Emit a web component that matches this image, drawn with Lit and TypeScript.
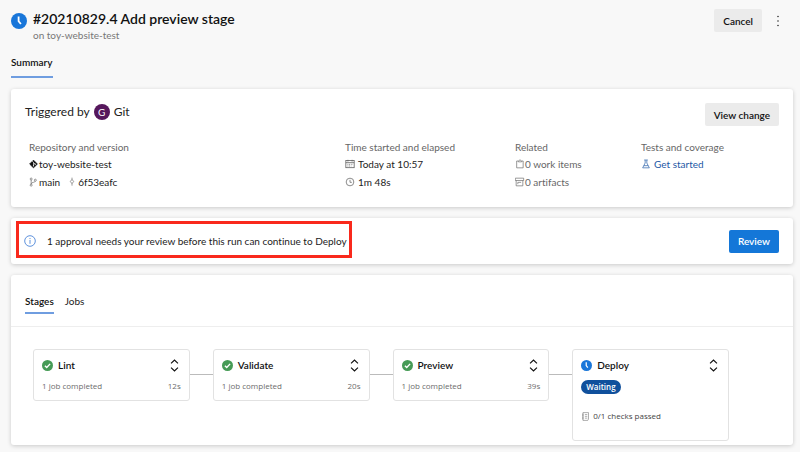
import { LitElement, html, css, svg, nothing } from "lit";
import { customElement, property } from "lit/decorators.js";

const clock = html`<svg class="clock" viewBox="0 0 16 16" aria-hidden="true">
  <circle cx="8" cy="8" r="8" fill="#1976d9" />
  <path d="M7.6 3.4V8.2L9.9 11" fill="none" stroke="#fff" stroke-width="1.8" />
</svg>`;

const check = html`<svg class="check" viewBox="0 0 16 16" aria-hidden="true">
  <circle cx="8" cy="8" r="8" fill="#469b56" />
  <path d="M4.2 8.4L6.9 11L11.8 5.6" fill="none" stroke="#fff" stroke-width="2" />
</svg>`;

const line = (body: unknown) => html`<svg
  class="line"
  viewBox="0 0 12 12"
  fill="none"
  stroke="currentColor"
  stroke-width="1"
  aria-hidden="true"
>${body}</svg>`;

const icons = {
  repo: line(svg`<path d="M5.4 1.4L10 6L5.4 10.6L.8 6Z" fill="#111" stroke="#111" stroke-linejoin="round" />
    <path d="M4 2.6L5.4 4.2V8.4M5.4 4.4L7.4 6.2" stroke="#fff" stroke-width=".8" />
    <circle cx="5.4" cy="8.2" r=".8" fill="#fff" stroke="none" /><circle cx="7.4" cy="6.2" r=".8" fill="#fff" stroke="none" />`),
  branch: line(svg`<g stroke-width=".8"><circle cx="2.6" cy="2.4" r="1.2" /><circle cx="2.6" cy="9.8" r="1.2" />
    <circle cx="7.6" cy="3.8" r="1.2" /><path d="M2.6 3.6V8.6M7.6 5C7.6 6.8 2.8 6 2.6 8.2" /></g>`),
  commit: line(svg`<g stroke-width=".8"><path d="M6 2.8L8 5.4L6 8L4 5.4ZM6 .8V2.8M6 8V10.4" /></g>`),
  calendar: line(svg`<rect x="1" y="1.8" width="10" height="8.6" /><path d="M1 4.4H11M3.5 1V3M8.5 1V3" />
    <path d="M3 6.4H9.4M3 8.4H7.6" stroke-dasharray="1 1" />`),
  time: line(svg`<circle cx="6" cy="6" r="4.6" stroke-width=".9" /><path d="M6 3.4V6.4H8.2" stroke-width=".9" />`),
  work: line(svg`<path d="M4 2.4H2V10.6H9.8V2.4H8M4 3.4C4 .6 8 .6 8 3.4Z" stroke-width=".8" />`),
  artifact: line(svg`<path d="M.4 1.4H10.4V4.2H.4ZM1.4 4.2V10.6H9.4V4.2M3.4 8.6V6.4H7.4" stroke-width=".8" />`),
  flask: line(svg`<path d="M3.8 1.2H8.2M5 1.4V4.8L2 10.6H10L7 4.8V1.4M3.4 8H8.6" stroke-width=".8" />`),
  info: line(svg`<circle cx="6" cy="6" r="5.3" stroke-width=".9" /><path d="M6 5V8.8M6 3V4.1" stroke-width=".9" />`),
  checks: line(svg`<path d="M2.6 .8H10V9.4L9 11.2H2.6ZM1.4 3H3.6M1.4 5H3.6M1.4 7H3.6M1.4 9H3.6M5.2 3.4H8.4M5.2 5.8H8.4M5.2 8.2H8.4" stroke-width=".8" />`),
  expand: line(svg`<path d="M2.8 4L6 .9L9.2 4M2.8 8L6 11.1L9.2 8" stroke="#111" stroke-width="1.1" />`),
};

interface Stage {
  name: string;
  duration?: string;
  checks?: string;
}

const stages: Stage[] = [
  { name: "Lint", duration: "12s" },
  { name: "Validate", duration: "20s" },
  { name: "Preview", duration: "39s" },
  { name: "Deploy", checks: "0/1 checks passed" },
];

@customElement("stage-card")
class StageCard extends LitElement {
  @property({ attribute: false }) stage!: Stage;

  static styles = css`
    :host {
      display: block;
      box-sizing: border-box;
      border: 1px solid #e2e2e2;
      border-radius: 3px;
      background: #fff;
      padding: 8px;
    }
    .head {
      display: flex;
      align-items: center;
      gap: 5px;
      height: 14px;
    }
    .name {
      margin: 0;
      flex: 1;
      font-size: 10px;
      line-height: 14px;
      font-weight: 600;
      color: #111;
    }
    svg {
      display: block;
      flex: none;
      width: 11px;
      height: 11px;
    }
    .toggle {
      border: 0;
      padding: 0;
      background: none;
    }
    .toggle svg {
      width: 13px;
      height: 13px;
    }
    .foot,
    .waiting,
    .checks {
      font-family: "Open Sans", "Noto Sans", sans-serif;
      font-size: 8px;
    }
    .foot {
      display: flex;
      justify-content: space-between;
      margin-top: 8px;
      line-height: 12px;
      color: #6c6c6c;
    }
    .waiting {
      display: block;
      width: fit-content;
      margin-top: 8px;
      padding: 0 5px;
      border-radius: 7px;
      background: #10509c;
      color: #fff;
      font-weight: 600;
      line-height: 14px;
    }
    .checks {
      display: flex;
      align-items: center;
      gap: 3px;
      margin: 16px 0 10px;
      line-height: 12px;
      color: #444;
    }
    .checks svg {
      width: 9px;
      height: 9px;
      color: #777;
    }
  `;

  render() {
    const { name, duration, checks } = this.stage;
    return html`
      <div class="head">
        ${checks ? clock : check}
        <h3 class="name">${name}</h3>
        <button class="toggle" aria-label="Expand ${name}">${icons.expand}</button>
      </div>
      ${checks
        ? html`<span class="waiting">Waiting</span>
            <div class="checks">${icons.checks}<span>${checks}</span></div>`
        : html`<div class="foot"><span>1 job completed</span><span>${duration}</span></div>`}
    `;
  }
}

@customElement("app-root")
class AppRoot extends LitElement {
  static styles = css`
    :host {
      display: block;
      box-sizing: border-box;
      min-height: 100vh;
      padding: 9px 7px 7px 11px;
      background: #f8f8f8;
      font-family: Lato, "Open Sans", sans-serif;
      font-variant-ligatures: none;
      font-size: 10px;
      line-height: 14px;
      color: #222;
    }
    h1, h2, p, dl, dd, dt {
      margin: 0;
      font-weight: 400;
    }
    svg {
      display: block;
      flex: none;
    }
    button {
      font: inherit;
      border: 0;
      font-weight: 600;
      border-radius: 2px;
      height: 23px;
      padding: 0 9px;
      color: #111;
      background: #ebebeb;
    }
    a {
      color: inherit;
      text-decoration: none;
    }
    header {
      display: flex;
      align-items: flex-start;
      gap: 6px;
    }
    header .clock {
      width: 16px;
      height: 16px;
      margin-top: 4px;
    }
    .titles {
      flex: 1;
    }
    h1 {
      font-size: 14px;
      line-height: 20px;
      font-weight: 600;
      color: #111;
    }
    .sub {
      line-height: 12px;
      color: #777;
    }
    header .more {
      background: none;
      padding: 0 8px;
      margin-right: 5px;
    }
    .more svg {
      width: 4px;
      height: 12px;
    }
    .tabs {
      display: flex;
      gap: 11px;
    }
    .tab {
      border-bottom: 2px solid transparent;
    }
    .tab.on {
      font-weight: 600;
      color: #111;
      border-color: #6f9de0;
    }
    .top .tab {
      padding-bottom: 7px;
    }
    .top {
      margin: 14px 0 11px;
    }
    .card {
      background: #fff;
      border-radius: 3px;
      box-shadow: 0 1px 4px #00000030;
      margin-bottom: 11px;
    }
    .run {
      padding: 14px 14px 14px;
    }
    .trigger {
      display: flex;
      align-items: flex-start;
      justify-content: space-between;
    }
    h2 {
      display: flex;
      align-items: center;
      gap: 4px;
      font-size: 12px;
      line-height: 18px;
    }
    .avatar {
      width: 16px;
      border-radius: 50%;
      background: #56175c;
      color: #fff;
      text-align: center;
      font-size: 10px;
      line-height: 16px;
    }
    .facts {
      display: grid;
      grid-template-columns: 316fr 170fr 126fr 138fr;
      padding: 14px 0 0 4px;
    }
    dt {
      color: #666;
      margin-bottom: 3px;
    }
    dt, dd {
      height: 14px;
    }
    dd {
      display: flex;
      align-items: center;
      gap: 3px;
      margin-bottom: 4px;
    }
    .line {
      width: 10px;
      height: 10px;
      color: #666;
    }
    .tight {
      gap: 0;
    }
    .muted {
      color: #666;
    }
    .hash {
      display: flex;
      align-items: center;
      margin-left: 7px;
      gap: 1px;
    }
    .link, .link .line {
      color: #1c57a5;
    }
    .banner {
      display: flex;
      align-items: center;
      justify-content: space-between;
      min-height: 46px;
      padding-right: 14px;
    }
    .message {
      display: flex;
      align-items: center;
      align-self: flex-start;
      gap: 11px;
      margin: 3px 5px 6px;
      padding: 10px 2px 7px 5px;
      border: 3px solid #f9291c;
    }
    .message .line {
      width: 12px;
      height: 12px;
      color: #4d86d8;
    }
    .review {
      background: #1477d8;
      color: #fff;
    }
    .stages {
      margin-bottom: 0;
    }
    .stages .tabs {
      padding: 19px 14px 12px;
      border-bottom: 1px solid #eee;
    }
    .stages .tab {
      padding-bottom: 4px;
    }
    .flow {
      display: flex;
      align-items: flex-start;
      padding: 22px 64px 4px 22px;
    }
    stage-card {
      flex: 1 1 0;
      min-width: 0;
    }
    .link-line {
      width: 23px;
      height: 1px;
      margin-top: 25px;
      background: #bbb;
    }
  `;

  render() {
    return html`
      <header>
        ${clock}
        <div class="titles">
          <h1>#20210829.4 Add preview stage</h1>
          <p class="sub">on toy-website-test</p>
        </div>
        <button>Cancel</button>
        <button class="more" aria-label="More actions">
          <svg viewBox="0 0 4 12" fill="#333">
            <circle cx="2" cy="1.5" r=".8" /><circle cx="2" cy="6" r=".8" /><circle cx="2" cy="10.5" r=".8" />
          </svg>
        </button>
      </header>
      <nav class="tabs top"><a class="tab on" href="#summary">Summary</a></nav>

      <section class="card run">
        <div class="trigger">
          <h2>Triggered by <span class="avatar">G</span> Git</h2>
          <button>View change</button>
        </div>
        <div class="facts">
          <dl>
            <dt>Repository and version</dt>
            <dd class="tight">${icons.repo}<a href="#repo">toy-website-test</a></dd>
            <dd class="tight">
              ${icons.branch}<a href="#main">main</a><a class="hash" href="#commit">${icons.commit}6f53eafc</a>
            </dd>
          </dl>
          <dl>
            <dt>Time started and elapsed</dt>
            <dd>${icons.calendar}Today at 10:57</dd>
            <dd>${icons.time}1m 48s</dd>
          </dl>
          <dl>
            <dt>Related</dt>
            <dd class="tight muted">${icons.work}0 work items</dd>
            <dd class="tight muted">${icons.artifact}0 artifacts</dd>
          </dl>
          <dl>
            <dt>Tests and coverage</dt>
            <dd class="link">${icons.flask}<a href="#tests">Get started</a></dd>
          </dl>
        </div>
      </section>

      <section class="card banner">
        <p class="message">${icons.info}<span>1 approval needs your review before this run can continue to Deploy</span></p>
        <button class="review">Review</button>
      </section>

      <section class="card stages">
        <nav class="tabs">
          <a class="tab on" href="#stages">Stages</a>
          <a class="tab" href="#jobs">Jobs</a>
        </nav>
        <div class="flow">
          ${stages.map(
            (stage, i) => html`${i ? html`<div class="link-line"></div>` : nothing}<stage-card .stage=${stage}></stage-card>`
          )}
        </div>
      </section>
    `;
  }
}
